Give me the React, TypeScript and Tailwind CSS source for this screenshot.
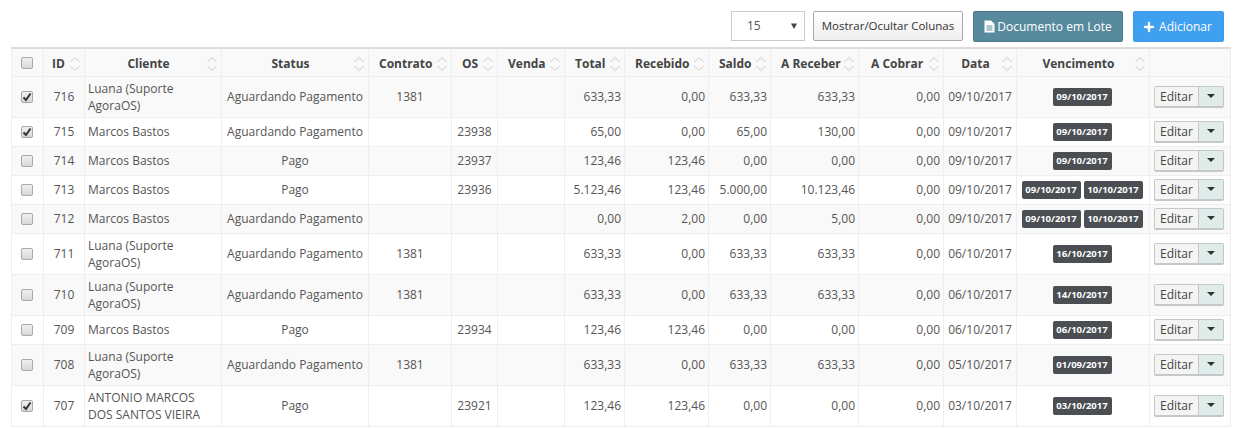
import React from "react";
import { Plus } from "lucide-react";

const headers = [
  ["ID", "pl-[8px] pr-0 text-left"], ["Cliente", "c"], ["Status", "c"], ["Contrato", "l"], ["OS", "l"], ["Venda", "l"],
  ["Total", "l"], ["Recebido", "l"], ["Saldo", "l"], ["A Receber", "l"], ["A Cobrar", "pl-[12px] pr-0 text-left"], ["Data", "c"], ["Vencimento", "c"],
];
const widths = [32, 41, 137, 147, 83, 46, 67, 60, 84, 62, 88, 85, 73, 133, 81];

type Row = { c: boolean; id: string; cl: string[]; st: string; ct: string; os: string; vals: string[]; d: string; v: string[] };
const AO = ["Luana (Suporte", "AgoraOS)"];
const MB = ["Marcos Bastos"];
const AG = "Aguardando Pagamento";
const rows: Row[] = [
  { c: true, id: "716", cl: AO, st: AG, ct: "1381", os: "", vals: ["633,33", "0,00", "633,33", "633,33", "0,00"], d: "09/10/2017", v: ["09/10/2017"] },
  { c: true, id: "715", cl: MB, st: AG, ct: "", os: "23938", vals: ["65,00", "0,00", "65,00", "130,00", "0,00"], d: "09/10/2017", v: ["09/10/2017"] },
  { c: false, id: "714", cl: MB, st: "Pago", ct: "", os: "23937", vals: ["123,46", "123,46", "0,00", "0,00", "0,00"], d: "09/10/2017", v: ["09/10/2017"] },
  { c: false, id: "713", cl: MB, st: "Pago", ct: "", os: "23936", vals: ["5.123,46", "123,46", "5.000,00", "10.123,46", "0,00"], d: "09/10/2017", v: ["09/10/2017", "10/10/2017"] },
  { c: false, id: "712", cl: MB, st: AG, ct: "", os: "", vals: ["0,00", "2,00", "0,00", "5,00", "0,00"], d: "09/10/2017", v: ["09/10/2017", "10/10/2017"] },
  { c: false, id: "711", cl: AO, st: AG, ct: "1381", os: "", vals: ["633,33", "0,00", "633,33", "633,33", "0,00"], d: "06/10/2017", v: ["16/10/2017"] },
  { c: false, id: "710", cl: AO, st: AG, ct: "1381", os: "", vals: ["633,33", "0,00", "633,33", "633,33", "0,00"], d: "06/10/2017", v: ["14/10/2017"] },
  { c: false, id: "709", cl: MB, st: "Pago", ct: "", os: "23934", vals: ["123,46", "123,46", "0,00", "0,00", "0,00"], d: "06/10/2017", v: ["06/10/2017"] },
  { c: false, id: "708", cl: AO, st: AG, ct: "1381", os: "", vals: ["633,33", "0,00", "633,33", "633,33", "0,00"], d: "05/10/2017", v: ["01/09/2017"] },
  { c: true, id: "707", cl: ["ANTONIO MARCOS", "DOS SANTOS VIEIRA"], st: "Pago", ct: "", os: "23921", vals: ["123,46", "123,46", "0,00", "0,00", "0,00"], d: "03/10/2017", v: ["03/10/2017"] },
];

function Check({ on }: { on: boolean }) {
  return (
    <span className="inline-flex items-center justify-center w-[12px] h-[12px] rounded-[2px] border border-[#a9a9a9] bg-gradient-to-b from-[#f0f0f0] to-[#d8d8d8] align-middle -translate-x-[1px] -translate-y-[1px]">
      {on && (
        <svg width="10" height="10" viewBox="0 0 10 10">
          <path d="M1.5 5.5 L4 8 L8.5 1.5" fill="none" stroke="#333" strokeWidth="2" />
        </svg>
      )}
    </span>
  );
}

function Sort() {
  return (
    <svg className="absolute right-[3px] top-[7px]" width="12" height="16" viewBox="0 0 12 16">
      <path d="M1.5 6 L6 1.5 L10.5 6" fill="none" stroke="#ccc" strokeWidth="1" />
      <path d="M1.5 10 L6 14.5 L10.5 10" fill="none" stroke="#ccc" strokeWidth="1" />
    </svg>
  );
}

const td = "border border-[#eeeeee] px-[5px] py-[3px] align-middle leading-[17px]";

export default function App() {
  return (
    <div className="w-[1233px] h-[428px] overflow-hidden bg-white text-[#555] text-[12px] font-['Open_Sans',sans-serif]">
      <div className="flex justify-end items-start pt-[11px] pr-[9px] h-[47px]">
        <div className="w-[74px] h-[30px] border border-[#ccc] bg-white flex items-center justify-between pl-[15px] pr-[6px] text-[#555]">
          <span>15</span>
          <svg width="8" height="8" viewBox="0 0 8 8"><path d="M1 1.5 H7 L4 7 Z" fill="#444" /></svg>
        </div>
        <button className="ml-[8px] w-[150px] h-[30px] rounded-[2px] border border-[#aaa] bg-gradient-to-b from-white to-[#efefef] text-[#333] text-[11.5px]">
          Mostrar/Ocultar Colunas
        </button>
        <button className="ml-[10px] w-[150px] h-[31px] rounded-[2px] border border-[#4c7a8c] bg-[#588a9e] text-white text-[12px] flex items-center justify-center gap-[2px]">
          <svg width="11" height="13" viewBox="0 0 11 13">
            <path d="M0.5 0.5 H7 L10.5 4 V12.5 H0.5 Z" fill="white" />
            <path d="M2.5 6 H8.5 M2.5 8 H8.5 M2.5 10 H8.5" stroke="#588a9e" strokeWidth="1" />
          </svg>
          Documento em Lote
        </button>
        <button className="ml-[10px] w-[91px] h-[31px] rounded-[2px] border border-[#3a9bec] bg-[#3fa0f0] text-white text-[12px] flex items-center justify-center gap-[3px] pr-[3px]">
          <Plus size={14} strokeWidth={4} />
          Adicionar
        </button>
      </div>
      <table className="ml-[11px] w-[1219px] table-fixed border-collapse border-t-2 border-t-[#dddddd]">
        <colgroup>
          {widths.map((w, i) => (
            <col key={i} style={{ width: w }} />
          ))}
        </colgroup>
        <thead>
          <tr className="h-[28px] bg-[#f9f9f9]">
            <th className={td + " text-center !py-0"}><Check on={false} /></th>
            {headers.map(([h, a]) => (
              <th key={h} className={"relative border border-[#eeeeee] py-0 font-bold text-[#444] " + (a === "c" ? "text-center pl-[10px] pr-[19px]" : a === "l" ? "text-left pl-[10px] pr-0" : a)}>
                <span className="relative top-[2px]">{h}</span>
                <Sort />
              </th>
            ))}
            <th className="border border-[#eeeeee]"></th>
          </tr>
        </thead>
        <tbody>
          {rows.map((r, i) => (
            <tr key={r.id} className={(r.cl.length > 1 ? "h-[41px] " : "h-[29px] ") + (i % 2 === 0 ? "bg-[#f9f9f9]" : "bg-white")}>
              <td className={td + " text-center"}><Check on={r.c} /></td>
              <td className={td + " text-center"}>{r.id}</td>
              <td className={td + " whitespace-nowrap !pl-[3px]"}>
                {r.cl.map((l) => (
                  <div key={l}>{l}</div>
                ))}
              </td>
              <td className={td + " text-center whitespace-nowrap"}>{r.st}</td>
              <td className={td + " text-center"}>{r.ct}</td>
              <td className={td + " text-center"}>{r.os}</td>
              <td className={td}></td>
              {r.vals.map((v, k) => (
                <td key={k} className={td + " text-right whitespace-nowrap !pr-[3px]"}>{v}</td>
              ))}
              <td className={td + " text-center whitespace-nowrap !px-0"}>{r.d}</td>
              <td className={td + " text-center whitespace-nowrap !pl-0 !pr-[2px]"}>
                <div className="flex justify-center gap-[3px]">
                  {r.v.map((x) => (
                    <span key={x} className="inline-block bg-[#4b4e53] text-white text-[9.5px] font-bold leading-[18px] h-[18px] w-[59px] rounded-[2px]">{x}</span>
                  ))}
                </div>
              </td>
              <td className={td + " !pl-[4px] !pr-[5px]"}>
                <div className="flex h-[22px] w-[70px] rounded-[2px] border border-[#c4c8c8] border-b-2 overflow-hidden">
                  <span className="w-[43px] bg-[#f4f4f4] text-[#444] text-center leading-[19px]">Editar</span>
                  <span className="flex-1 bg-[#e0ecea] border-l border-[#c4c8c8] flex items-center justify-center">
                    <svg width="8" height="4" viewBox="0 0 8 4"><path d="M0 0 H8 L4 4 Z" fill="#333" /></svg>
                  </span>
                </div>
              </td>
            </tr>
          ))}
        </tbody>
      </table>
    </div>
  );
}
